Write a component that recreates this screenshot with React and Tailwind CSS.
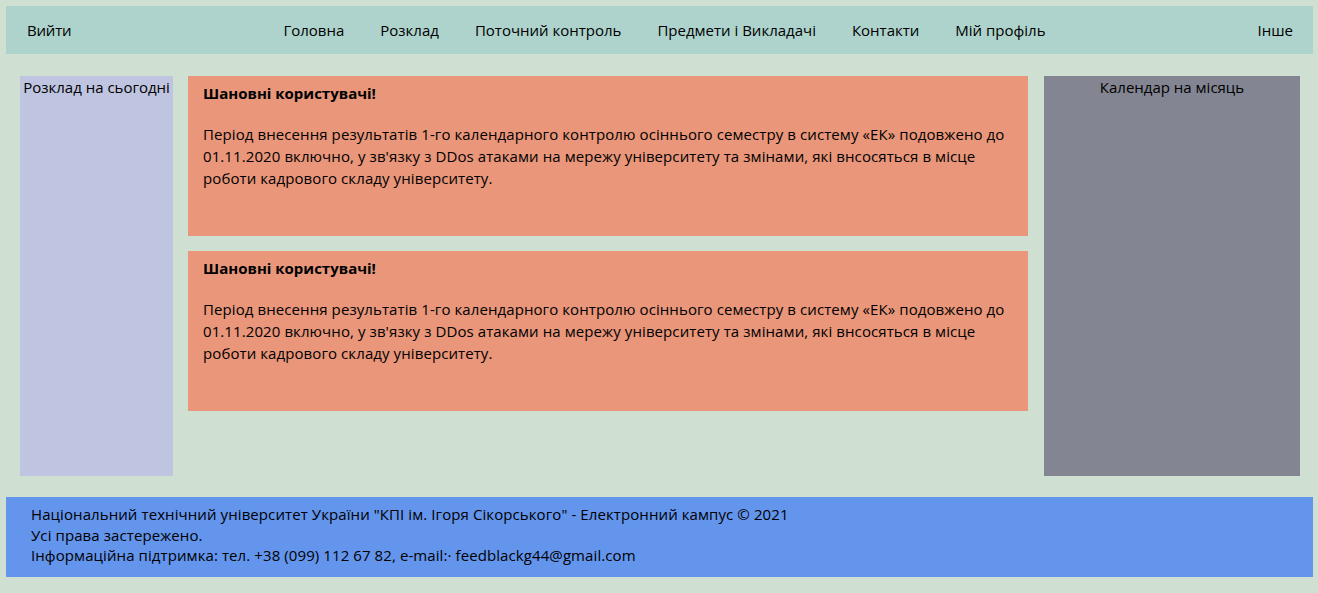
import React from "react";

const font = { fontFamily: '"Open Sans", "Noto Sans", sans-serif' };

function Notice() {
  return (
    <div className="h-[160px] bg-[#e9967a] px-[15px] pt-[6px] text-[15px] text-black">
      <div className="font-bold leading-[22px]">Шановні користувачі!</div>
      <p className="mt-[19px] leading-[22px] tracking-[0.09px]">
        Період внесення результатів 1-го календарного контролю осіннього семестру в систему «ЕК» подовжено до
        01.11.2020 включно, у зв'язку з DDos атаками на мережу університету та змінами, які внсосяться в місце
        роботи кадрового складу університету.
      </p>
    </div>
  );
}

export default function App() {
  const nav = ["Головна", "Розклад", "Поточний контроль", "Предмети і Викладачі", "Контакти", "Мій профіль"];
  return (
    <div className="min-h-[593px] bg-[#cfe0d2] pt-[6px] pb-[16px] text-black" style={font}>
      <header className="ml-[6px] mr-[5px] flex h-[48px] items-center justify-between bg-[#aed3cc] pl-[21px] pr-[20px] text-[15px]">
        <span className="tracking-[-0.2px]">Вийти</span>
        <nav className="flex gap-[36px]">
          {nav.map((n) => (
            <span key={n}>{n}</span>
          ))}
        </nav>
        <span>Інше</span>
      </header>

      <main className="mt-[22px] flex h-[400px] gap-[15px] pl-[20px] pr-[18px] text-[15px]">
        <aside className="w-[153px] shrink-0 bg-[#bfc5e0] text-center leading-[22px]">Розклад на сьогодні</aside>
        <section className="flex w-[840px] shrink-0 flex-col gap-[15px]">
          <Notice />
          <Notice />
        </section>
        <aside className="ml-[1px] w-[256px] shrink-0 bg-[#838592] text-center leading-[22px]">Календар на місяць</aside>
      </main>

      <footer className="ml-[6px] mr-[5px] mt-[21px] h-[80px] bg-[#6495ed] pl-[25px] pt-[7px] text-[15px] leading-[20.5px] tracking-[0.09px]">
        <div>Національний технічний університет України "КПІ ім. Ігоря Сікорського" - Електронний кампус © 2021</div>
        <div>Усі права застережено.</div>
        <div>Інформаційна підтримка: тел. +38 (099) 112 67 82, e-mail:· feedblackg44@gmail.com</div>
      </footer>
    </div>
  );
}
